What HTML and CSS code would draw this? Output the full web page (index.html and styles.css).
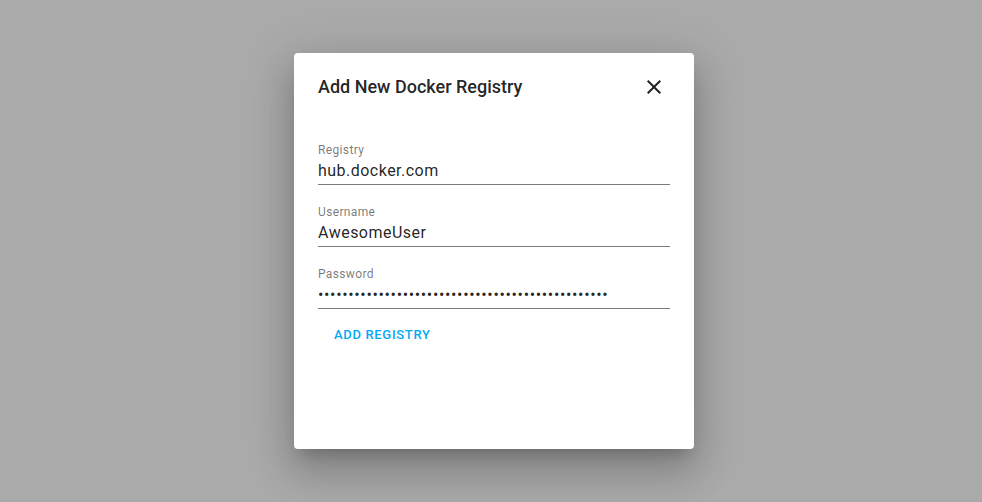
FILE: index.html
```html
<!DOCTYPE html>
<html lang="en">
<head>
<meta charset="utf-8">
<title>Add New Docker Registry</title>
<link rel="stylesheet" href="styles.css">
</head>
<body>
<div class="backdrop">
  <div class="dialog" role="dialog" aria-labelledby="dlg-title">
    <div class="dialog-header">
      <h2 class="dialog-title" id="dlg-title">Add New Docker Registry</h2>
      <button class="close-btn" type="button" aria-label="Close">
        <svg viewBox="0 0 24 24" width="24" height="24" aria-hidden="true"><path d="M19 6.41L17.59 5 12 10.59 6.41 5 5 6.41 10.59 12 5 17.59 6.41 19 12 13.41 17.59 19 19 17.59 13.41 12z"/></svg>
      </button>
    </div>
    <div class="dialog-body">
      <div class="field">
        <label class="field-label">Registry</label>
        <div class="field-input">hub.docker.com</div>
      </div>
      <div class="field">
        <label class="field-label">Username</label>
        <div class="field-input">AwesomeUser</div>
      </div>
      <div class="field">
        <label class="field-label">Password</label>
        <div class="field-input password">••••••••••••••••••••••••••••••••••••••••••••••••</div>
      </div>
      <div class="actions">
        <button class="text-btn" type="button">Add Registry</button>
      </div>
    </div>
  </div>
</div>
</body>
</html>
```
FILE: styles.css
```css
html, body {
  margin: 0;
  padding: 0;
  height: 100%;
}
body {
  font-family: Roboto, "Noto Sans", Arial, sans-serif;
  background: #aaaaaa;
}
.backdrop {
  height: 100%;
  display: flex;
  justify-content: center;
  align-items: flex-start;
  padding: 53px 0 0 6px;
  box-sizing: border-box;
}
.dialog {
  width: 400px;
  height: 396px;
  background: #ffffff;
  border-radius: 4px;
  box-shadow: 0px 11px 15px -7px rgba(0,0,0,0.2), 0px 24px 38px 3px rgba(0,0,0,0.14), 0px 9px 46px 8px rgba(0,0,0,0.12);
  box-sizing: border-box;
}
.dialog-header {
  display: flex;
  align-items: center;
  justify-content: space-between;
  padding: 10px 16px 0 24px;
  height: 58px;
  box-sizing: border-box;
}
.dialog-title {
  margin: 0;
  font-size: 18px;
  font-weight: 500;
  line-height: 32px;
  color: rgba(0,0,0,0.87);
}
.close-btn {
  width: 48px;
  height: 48px;
  border: 0;
  background: transparent;
  padding: 12px;
  display: flex;
  align-items: center;
  justify-content: center;
  border-radius: 50%;
  cursor: pointer;
}
.close-btn svg {
  fill: rgba(0,0,0,0.87);
  display: block;
}
.dialog-body {
  padding: 30px 24px 0 24px;
  display: flex;
  flex-direction: column;
  gap: 18px;
}
.field {
  display: flex;
  flex-direction: column;
  padding-top: 1px;
  border-bottom: 1px solid #7b7b7b;
}
.field-label {
  font-size: 12px;
  line-height: 16px;
  color: rgba(0,0,0,0.54);
  letter-spacing: 0.03em;
}
.field-input {
  font-size: 16px;
  line-height: 19px;
  padding: 3px 0 4px;
  color: rgba(0,0,0,0.87);
  letter-spacing: 0.03em;
  white-space: nowrap;
  overflow: hidden;
}
.field-input.password {
  letter-spacing: 0.65px;
}
.actions {
  display: flex;
  margin-top: -10px;
}
.text-btn {
  font-family: inherit;
  font-size: 13px;
  font-weight: 500;
  line-height: 23px;
  letter-spacing: 0.67px;
  text-transform: uppercase;
  color: #03a9f4;
  background: transparent;
  border: 0;
  padding: 6px 16px;
  border-radius: 4px;
  cursor: pointer;
}
```
